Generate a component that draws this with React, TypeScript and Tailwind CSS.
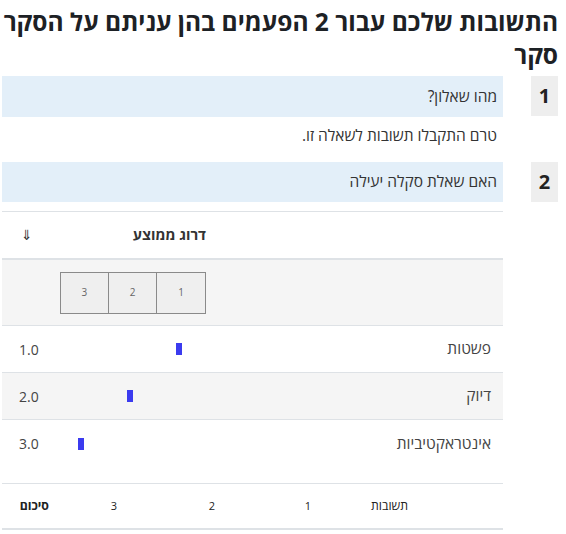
import React from 'react'

const rows = [
  { label: 'פשטות', value: 1, bg: 'bg-white' },
  { label: 'דיוק', value: 2, bg: 'bg-[#f5f5f5]' },
  { label: 'אינטראקטיביות', value: 3, bg: 'bg-white' },
]

// bar offset (px from the left of the scale cell) for a given average
const barLeft = (v: number) => 116 - (v - 1) * 49

function NumberBox({ n }: { n: number }) {
  return (
    <div className="w-[27px] h-[40px] bg-[#eeeeee] flex items-center justify-center text-[20px] font-bold text-[#222]">
      {n}
    </div>
  )
}

export default function App() {
  return (
    <div dir="rtl" className="w-[566px] min-h-[534px] bg-white font-['Open_Sans','DejaVu_Sans',sans-serif] text-[#333]">
      <h2 className="pt-[5px] pr-[8px] text-[24.5px] leading-[33px] font-bold text-[#1d2125] whitespace-nowrap">
        התשובות שלכם עבור 2 הפעמים בהן עניתם על הסקר
        <br />
        סקר
      </h2>

      <div className="flex mt-[5px] pr-[8px] gap-[28px]">
        <NumberBox n={1} />
        <div className="w-[501px]">
          <div className="h-[41px] bg-[#e3eff9] flex items-center pr-[6px] text-[15.5px]">מהו שאלון?</div>
          <p className="pr-[6px] mt-[8px] mb-[17px] text-[15.5px] leading-[20px]">טרם התקבלו תשובות לשאלה זו.</p>
        </div>
      </div>

      <div className="flex pr-[8px] gap-[28px]">
        <NumberBox n={2} />
        <div className="w-[501px]">
          <div className="h-[40px] bg-[#e3eff9] flex items-center pr-[6px] text-[15.5px]">האם שאלת סקלה יעילה</div>

          <div className="mt-[9px] border-t border-[#dee2e6]">
            <div className="flex h-[48px] items-center border-b-2 border-[#dee2e6] text-[14.5px] font-bold">
              <div className="w-[297px]" />
              <div className="w-[146px]">דרוג ממוצע</div>
              <div className="flex-1 text-left pl-[19px] font-['DejaVu_Sans'] text-[14px] font-normal">⇓</div>
            </div>

            <div className="flex h-[66px] items-center bg-[#f5f5f5] border-b border-[#dee2e6]">
              <div className="w-[297px]" />
              <div dir="ltr" className="w-[146px] flex">
                {[3, 2, 1].map((n, i) => (
                  <div
                    key={n}
                    className={`w-[48.67px] h-[42px] bg-[#efefef] border-y border-[#8a8a8a] flex items-center justify-center text-[10px] text-[#666] ${i === 0 ? 'border-x' : 'border-r'}`}
                  >
                    {n}
                  </div>
                ))}
              </div>
            </div>

            {rows.map((r, i) => (
              <div
                key={r.label}
                className={`flex h-[47px] items-center ${r.bg} ${i < 2 ? 'border-b border-[#dee2e6]' : ''}`}
              >
                <div className="w-[297px] pr-[12px] text-[15.5px] text-[#444]">{r.label}</div>
                <div dir="ltr" className="w-[146px] h-[12px] flex">
                  <div className="w-[6px] h-[12px] bg-[#3b3bef]" style={{ marginLeft: barLeft(r.value) }} />
                </div>
                <div className="flex-1 text-left pl-[17px] text-[14px] text-[#444]">{r.value.toFixed(1)}</div>
              </div>
            ))}

            <div className="mt-[16px] flex h-[47px] items-center border-t border-[#dee2e6] border-b-2 text-[11px] text-[#222]">
              <div className="w-[95px]" />
              <div className="w-[97px] text-[12.3px]">תשובות</div>
              <div className="w-[96px]">1</div>
              <div className="w-[98px]">2</div>
              <div className="w-[68px]">3</div>
              <div className="flex-1 font-bold text-[12.3px]">סיכום</div>
            </div>
          </div>
        </div>
      </div>
    </div>
  )
}
